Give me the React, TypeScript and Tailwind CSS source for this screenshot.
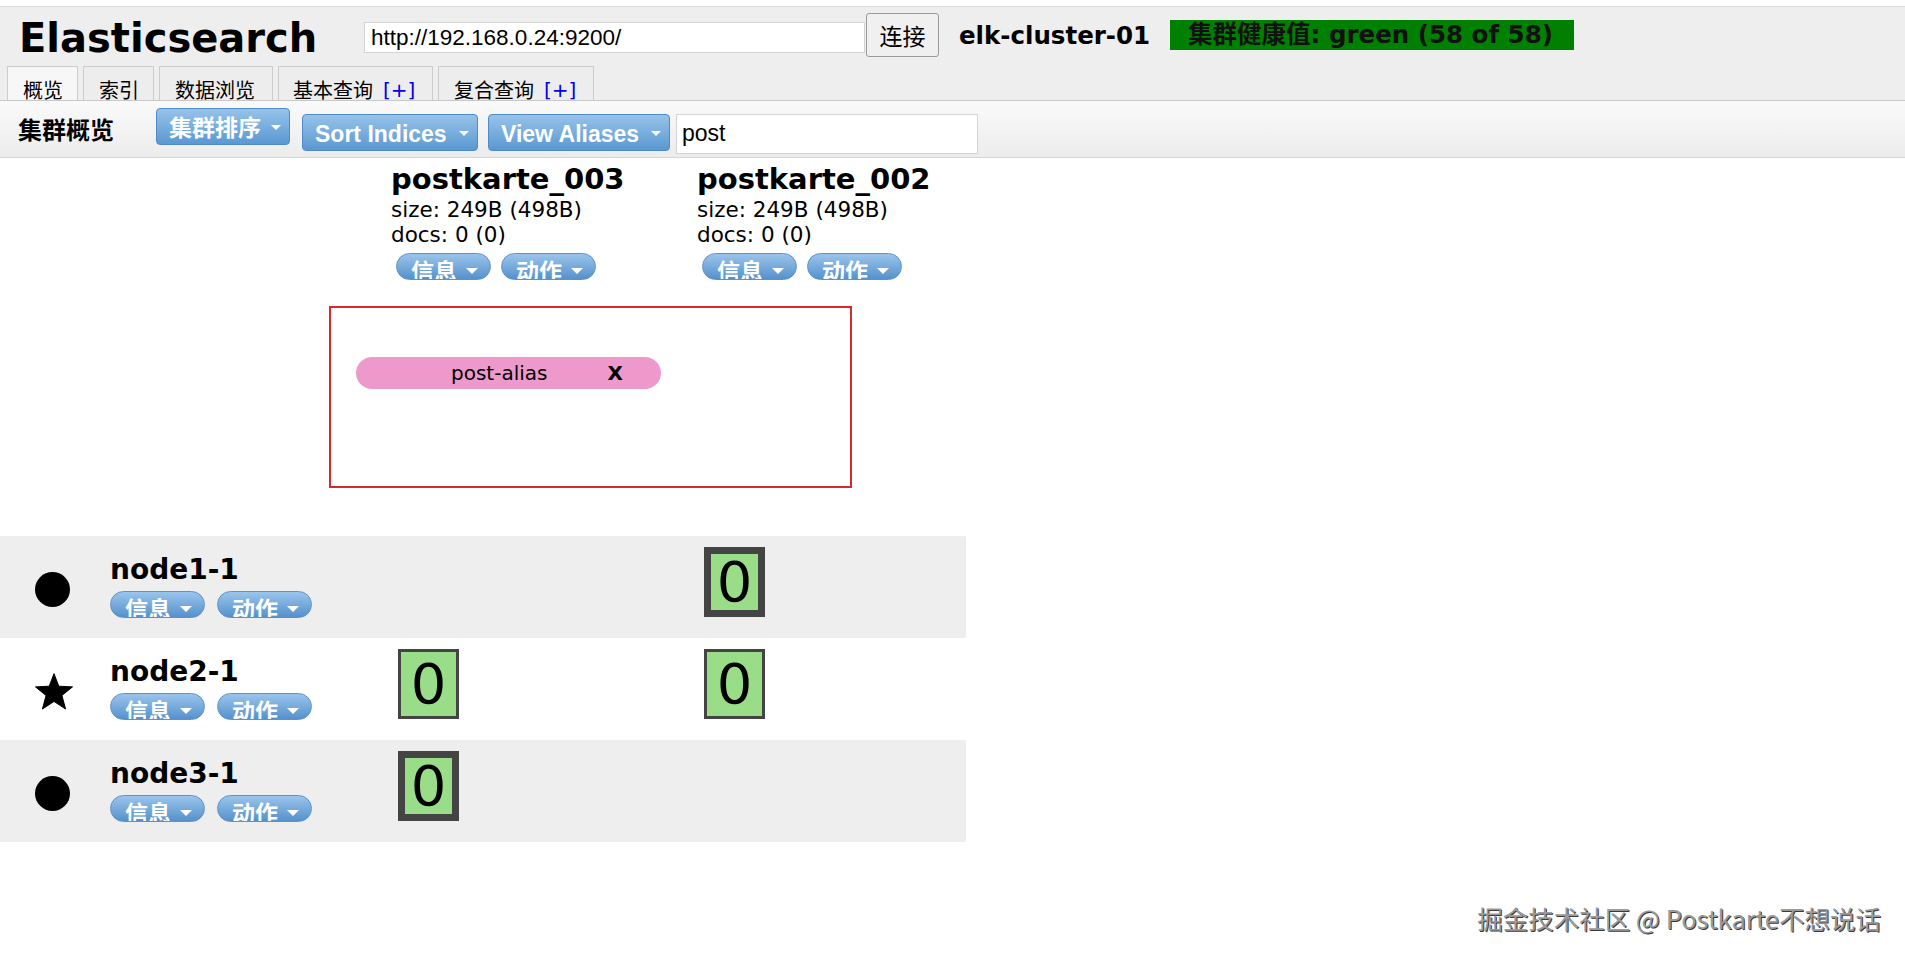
import React from "react";

const DV = "font-['DejaVu_Sans','Noto_Sans_CJK_SC',sans-serif]";
const AR = "font-['Liberation_Sans','Noto_Sans_CJK_SC',sans-serif]";
const CJK = "font-['Noto_Sans_CJK_SC',sans-serif]";

function Caret({ size = "sm" }: { size?: "sm" | "md" }) {
  return size === "md" ? (
    <span className="w-0 h-0 border-l-[6px] border-r-[6px] border-t-[6px] border-l-transparent border-r-transparent border-t-white" />
  ) : (
    <span className="w-0 h-0 border-l-[5px] border-r-[5px] border-t-[5px] border-l-transparent border-r-transparent border-t-white" />
  );
}

function PillBtn({ label }: { label: string }) {
  return (
    <div className="w-[95px] h-[27px] shrink-0 rounded-full border border-[#5b93c9] bg-linear-to-b from-[#9ac5ec] to-[#5691cb] overflow-hidden flex items-start justify-between pl-[14px] pr-[12px]">
      <span className={`${CJK} text-white font-bold text-[23px] leading-[23px] mt-[5px]`}>{label}</span>
      <span className="mt-[14px] flex">
        <Caret size="md" />
      </span>
    </div>
  );
}

function ToolBtn({ label, w, mt }: { label: string; w: string; mt: string }) {
  return (
    <div
      className={`${w} ${mt} h-[37px] shrink-0 rounded-[4px] border border-[#4f8ac4] bg-linear-to-b from-[#96c3ea] to-[#5a98d1] flex items-center justify-between pl-[12px] pr-[8px] pt-[2px]`}
    >
      <span className={`${AR} text-white font-bold text-[23px] leading-[30px] whitespace-nowrap`}>{label}</span>
      <Caret />
    </div>
  );
}

function Shard({ primary }: { primary: boolean }) {
  return (
    <div
      className={
        primary
          ? "w-[61px] h-[70px] ml-[7px] mt-[11px] border-[7px] border-[#444444] bg-[#99dd88] flex items-center justify-center"
          : "w-[61px] h-[70px] ml-[7px] mt-[11px] border-[3px] border-[#444444] bg-[#99dd88] flex items-center justify-center"
      }
    >
      <span className={`${DV} text-[56px] leading-none text-black`}>0</span>
    </div>
  );
}

function Star() {
  return (
    <svg width="40" height="38" viewBox="0 0 24 23" className="block">
      <path
        d="M12 0.4 L14.9 8.0 L23.2 8.4 L16.8 13.6 L19 21.8 L12 17.2 L5 21.8 L7.2 13.6 L0.8 8.4 L9.1 8.0 Z"
        fill="#000"
        stroke="#000"
        strokeWidth="0.6"
        strokeLinejoin="round"
      />
    </svg>
  );
}

function NodeRow({
  name,
  icon,
  bg,
  shards,
}: {
  name: string;
  icon: "circle" | "star";
  bg: string;
  shards: (null | boolean)[];
}) {
  return (
    <div className={`${bg} w-[966px] h-[102px] grid grid-cols-[391px_306px_269px] rounded-r-[2px]`}>
      <div className="flex items-start h-full">
        <div className="w-[110px] h-full pl-[34px] flex items-center pt-[5px]">
          {icon === "circle" ? (
            <div className="w-[35px] h-[35px] ml-[1px] rounded-full bg-black" />
          ) : (
            <Star />
          )}
        </div>
        <div className="pt-[20px] flex flex-col">
          <div className={`${DV} font-bold text-[28px] leading-[28px] text-black`}>{name}</div>
          <div className="mt-[7px] flex gap-[12px]">
            <PillBtn label="信息" />
            <PillBtn label="动作" />
          </div>
        </div>
      </div>
      {shards.map((s, i) => (
        <div key={i} className="flex items-start">
          {s === null ? null : <Shard primary={s} />}
        </div>
      ))}
    </div>
  );
}

function IndexHead({ name }: { name: string }) {
  return (
    <div className="flex flex-col text-black">
      <div className={`${DV} font-bold text-[29px] leading-[36px] whitespace-nowrap`}>{name}</div>
      <div className={`${DV} text-[21.5px] leading-[25px] whitespace-nowrap`}>size: 249B (498B)</div>
      <div className={`${DV} text-[21.5px] leading-[25px] whitespace-nowrap`}>docs: 0 (0)</div>
      <div className="mt-[6px] ml-[5px] flex gap-[10px]">
        <PillBtn label="信息" />
        <PillBtn label="动作" />
      </div>
    </div>
  );
}

export default function App() {
  return (
    <div className="relative w-full min-h-[958px] bg-white overflow-hidden">
      {/* top white strip */}
      <div className="h-[6px] bg-white" />

      {/* header */}
      <div className="border-t border-b border-t-[#dddddd] border-b-[#c8c8c8] bg-[#eeeeee] h-[95px] flex flex-col">
        <div className="h-[59px] flex items-start pl-[19px]">
          <div className={`${DV} w-[345px] mt-[11px] text-[40px] leading-[40px] font-bold text-black whitespace-nowrap`}>
            Elasticsearch
          </div>
          <div className={`${AR} w-[501px] h-[31px] mt-[15px] bg-white border border-[#d4d4d4] text-[22.5px] leading-[29px] pl-[6px] text-black whitespace-nowrap`}>
            http://192.168.0.24:9200/
          </div>
          <div className={`${CJK} ml-[1px] w-[73px] h-[44px] mt-[6px] bg-[#f0f0f0] border border-[#9a9a9a] rounded-[3px] flex items-center justify-center text-[23px] text-black`}>
            连接
          </div>
          <div className={`${DV} ml-[20px] mt-[14px] text-[24.5px] leading-[30px] font-bold text-black whitespace-nowrap`}>
            elk-cluster-01
          </div>
          <div className={`${DV} ml-[20px] mt-[13px] w-[404px] h-[30px] bg-[#008000] pl-[18px] text-[24.5px] leading-[30px] font-bold text-[#111111] whitespace-nowrap`}>
            集群健康值: green (58 of 58)
          </div>
        </div>
        <div className="h-[34px] flex items-end pl-[7px] gap-[5px]">
          <div className={`${CJK} w-[71px] h-[34px] bg-[#f7f7f7] border border-b-0 border-[#cccccc] pl-[15px] pt-[13px] text-[20px] leading-[20px] text-black`}>
            概览
          </div>
          <div className={`${CJK} w-[71px] h-[34px] bg-[#ededed] border border-b-0 border-[#cccccc] pl-[15px] pt-[13px] text-[20px] leading-[20px] text-black`}>
            索引
          </div>
          <div className={`${CJK} w-[114px] h-[34px] bg-[#ededed] border border-b-0 border-[#cccccc] pl-[15px] pt-[13px] text-[20px] leading-[20px] text-black whitespace-nowrap`}>
            数据浏览
          </div>
          <div className={`${CJK} w-[155px] h-[34px] bg-[#ededed] border border-b-0 border-[#cccccc] pl-[14px] pt-[13px] text-[20px] leading-[20px] text-black whitespace-nowrap flex`}>
            <span>基本查询</span>
            <span className={`${DV} ml-[10px] text-[#0000ee]`}>[+]</span>
          </div>
          <div className={`${CJK} w-[156px] h-[34px] bg-[#ededed] border border-b-0 border-[#cccccc] pl-[15px] pt-[13px] text-[20px] leading-[20px] text-black whitespace-nowrap flex`}>
            <span>复合查询</span>
            <span className={`${DV} ml-[10px] text-[#0000ee]`}>[+]</span>
          </div>
        </div>
      </div>

      {/* toolbar */}
      <div className="h-[57px] border-b border-[#d6d6d6] bg-linear-to-b from-[#fafafa] to-[#ececec] flex items-start">
        <div className={`${CJK} w-[156px] pl-[18px] mt-[12px] text-[24px] leading-[32px] font-bold text-black whitespace-nowrap`}>
          集群概览
        </div>
        <ToolBtn label="集群排序" w="w-[134px]" mt="mt-[7px]" />
        <div className="ml-[12px]">
          <ToolBtn label="Sort Indices" w="w-[176px]" mt="mt-[13px]" />
        </div>
        <div className="ml-[10px]">
          <ToolBtn label="View Aliases" w="w-[182px]" mt="mt-[13px]" />
        </div>
        <div className={`${AR} ml-[6px] mt-[13px] w-[302px] h-[40px] bg-white border border-[#d4d4d4] pl-[5px] text-[23px] leading-[36px] text-black`}>
          post
        </div>
      </div>

      {/* overview body */}
      <div className="pt-[3px]">
        <div className="w-[966px] grid grid-cols-[391px_306px_269px]">
          <div />
          <IndexHead name="postkarte_003" />
          <IndexHead name="postkarte_002" />
        </div>

        {/* aliases */}
        <div className="ml-[329px] mt-[26px] w-[523px] h-[182px] border-2 border-[#d42a30] pt-[49px] pl-[25px]">
          <div className="w-[305px] h-[32px] rounded-full bg-[#ee99cc] flex items-center pl-[95px]">
            <span className={`${DV} text-[20px] leading-[24px] text-black`}>post-alias</span>
            <span className={`${DV} ml-[60px] text-[20px] leading-[24px] font-bold text-black`}>X</span>
          </div>
        </div>

        {/* nodes */}
        <div className="mt-[48px] flex flex-col">
          <NodeRow name="node1-1" icon="circle" bg="bg-[#eeeeee]" shards={[null, true]} />
          <NodeRow name="node2-1" icon="star" bg="bg-white" shards={[false, false]} />
          <NodeRow name="node3-1" icon="circle" bg="bg-[#eeeeee]" shards={[true, null]} />
        </div>
      </div>

      {/* watermark */}
      <div
        className={`${CJK} absolute top-[901px] right-[24px] text-[25.5px] leading-[34px] font-normal text-[#9a9a9a] whitespace-nowrap [text-shadow:1px_1px_0_#3a3a3a,-1px_-1px_0_#ffffff]`}
      >
        掘金技术社区 @ Postkarte不想说话
      </div>
    </div>
  );
}
